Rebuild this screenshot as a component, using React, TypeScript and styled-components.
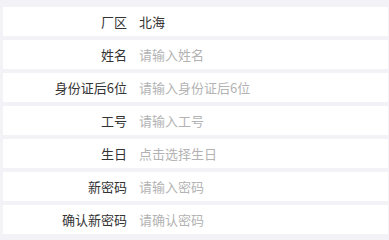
import React from "react";
import styled, { createGlobalStyle } from "styled-components";

const Global = createGlobalStyle`
  html, body { margin: 0; padding: 0; background: #f3f3f7; }
  body { font-family: "Noto Sans CJK SC", "Noto Sans", sans-serif; }
`;

const Form = styled.div`
  display: flex;
  flex-direction: column;
  gap: 4px;
  padding: 7px 1px 0 3px;
`;

const Row = styled.div`
  display: flex;
  align-items: center;
  height: 29px;
  background: #ffffff;
`;

const Label = styled.div`
  width: 124px;
  text-align: right;
  font-size: 13px;
  color: #333333;
  flex-shrink: 0;
`;

const Value = styled.div<{ $placeholder?: boolean }>`
  margin-left: 12px;
  font-size: 13px;
  color: ${(p) => (p.$placeholder ? "#b3b3b3" : "#333333")};
`;

const rows: { label: string; value: string; placeholder: boolean }[] = [
  { label: "厂区", value: "北海", placeholder: false },
  { label: "姓名", value: "请输入姓名", placeholder: true },
  { label: "身份证后6位", value: "请输入身份证后6位", placeholder: true },
  { label: "工号", value: "请输入工号", placeholder: true },
  { label: "生日", value: "点击选择生日", placeholder: true },
  { label: "新密码", value: "请输入密码", placeholder: true },
  { label: "确认新密码", value: "请确认密码", placeholder: true },
];

export default function App() {
  return (
    <>
      <Global />
      <Form>
        {rows.map((r) => (
          <Row key={r.label}>
            <Label>{r.label}</Label>
            <Value $placeholder={r.placeholder}>{r.value}</Value>
          </Row>
        ))}
      </Form>
    </>
  );
}
